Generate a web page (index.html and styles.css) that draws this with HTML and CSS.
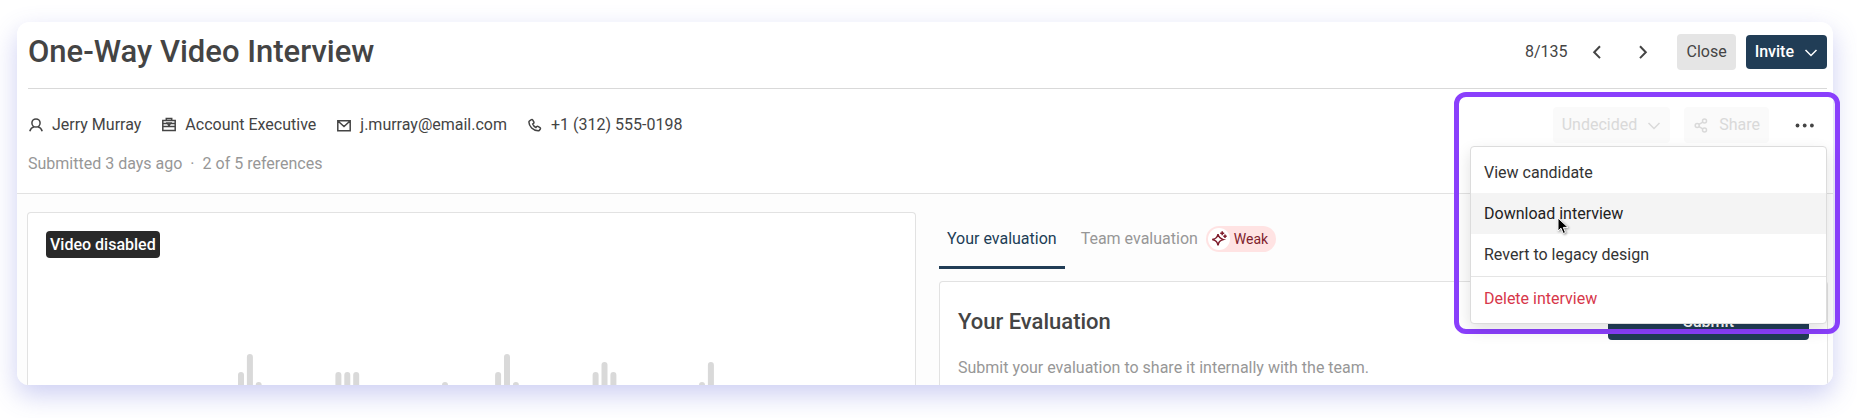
FILE: index.html
```html
<!DOCTYPE html>
<html lang="en">
<head>
    <meta charset="UTF-8">
    <meta name="viewport" content="width=device-width, initial-scale=1.0">
    <title>One-Way Video Interview</title>
    <link rel="stylesheet" href="styles.css">
</head>
<body>
    <main class="interview">
        <header class="interview-header">
            <h1>One-Way Video Interview</h1>
            <nav class="pager">
                <span class="pager-count">8/135</span>
                <button type="button" class="icon-btn" aria-label="Previous">
                    <svg width="16" height="16" viewBox="0 0 16 16"><path d="M11 2.3 5.2 8.2l5.8 5.9"/></svg>
                </button>
                <button type="button" class="icon-btn" aria-label="Next">
                    <svg width="16" height="16" viewBox="0 0 16 16"><path d="M5 2.3l5.8 5.9L5 14.1"/></svg>
                </button>
            </nav>
            <button type="button" class="btn btn-close">Close</button>
            <button type="button" class="btn btn-primary">
                Invite
                <svg width="14" height="14" viewBox="0 0 14 14"><path d="M1.5 5 7 10.5 12.5 5"/></svg>
            </button>
        </header>

        <section class="candidate">
            <div class="candidate-row">
                <ul class="details">
                    <li>
                        <svg width="16" height="16" viewBox="0 0 16 16"><circle cx="8" cy="6" r="4.1"/><path d="M1.8 14.2c.7-2.5 2.4-4 4.4-4.5M14.2 14.2c-.7-2.5-2.4-4-4.4-4.5"/></svg>
                        Jerry Murray
                    </li>
                    <li>
                        <svg width="16" height="16" viewBox="0 0 16 16"><path d="M1.8 3.5h12.4v9.9H1.8zM5.300 3.300V1.600h5.400v1.700M1.800 6.600h4.400M14.200 6.600H9.800M1.800 9.600h12.400M6.200 5.900h3.600L8 8.600z"/></svg>
                        Account Executive
                    </li>
                    <li>
                        <svg width="16" height="16" viewBox="0 0 16 16"><path d="M1.8 3.8h12.4v9.9H1.8zM2.2 4.2 8 9.6l5.8-5.4"/></svg>
                        j.murray@email.com
                    </li>
                    <li>
                        <svg width="16" height="16" viewBox="0 0 16 16"><path d="M2.6 3.8 4.4 2.7c.5-.3 1.1-.1 1.4.4l1.1 2c.2.5.1 1-.3 1.3l-.9.7c.6 1.6 1.6 2.7 3.2 3.4l.8-.9c.4-.4.9-.5 1.3-.2l2 1.2c.5.3.6.9.3 1.4l-.9 1.2c-.3.4-.8.6-1.3.6C6 13.7 2 9.5 1.900 5.100c0-.5.2-1 .7-1.300z"/></svg>
                        +1 (312) 555-0198
                    </li>
                </ul>

                <div class="actions">
                    <button type="button" class="btn btn-disabled" disabled>
                        Undecided
                        <svg width="14" height="14" viewBox="0 0 14 14"><path d="M1.5 5 7 10.5 12.5 5"/></svg>
                    </button>
                    <button type="button" class="btn btn-disabled" disabled>
                        <svg width="16" height="16" viewBox="0 0 16 16"><circle cx="4.2" cy="8.5" r="2"/><circle cx="11.5" cy="4" r="2"/><circle cx="11.5" cy="13" r="2"/><path d="m6 7.4 3.800-2.300M6 9.600l3.800 2.300"/></svg>
                        Share
                    </button>
                    <button type="button" class="icon-btn more-btn" aria-label="More actions" aria-expanded="true">
                        <svg width="20" height="16" viewBox="0 0 20 16"><circle cx="2.5" cy="8.5" r="1.9"/><circle cx="9.7" cy="8.5" r="1.9"/><circle cx="16.9" cy="8.5" r="1.9"/></svg>
                    </button>

                    <div class="highlight"></div>
                    <div class="menu">
                        <button type="button" class="menu-item">View candidate</button>
                        <button type="button" class="menu-item is-hovered">Download interview</button>
                        <button type="button" class="menu-item">Revert to legacy design</button>
                        <hr>
                        <button type="button" class="menu-item is-danger">Delete interview</button>
                        <svg class="pointer" width="12" height="19" viewBox="0 0 12 19"><path d="M1 1v13l3-2.8 2.2 5.3 2.3-1-2.2-5.1H11z"/></svg>
                    </div>
                </div>
            </div>
            <p class="submitted"><span>Submitted 3 days ago</span><span>·</span><span>2 of 5 references</span></p>
        </section>

        <section class="workspace">
            <div class="panel video-panel">
                <span class="video-label">Video disabled</span>
                <svg class="waveform" width="492" height="31" viewBox="-12 0 492 31">
                    <rect x="0" y="18" width="6" height="40" rx="3"/>
                    <rect x="8.9" y="0" width="6" height="76" rx="3"/>
                    <rect x="17.7" y="28" width="6" height="20" rx="3"/>
                    <rect x="97.4" y="18" width="6" height="40" rx="3"/>
                    <rect x="106.3" y="18" width="6" height="40" rx="3"/>
                    <rect x="115.2" y="18" width="6" height="40" rx="3"/>
                    <rect x="204" y="28" width="6" height="20" rx="3"/>
                    <rect x="257.1" y="18" width="6" height="40" rx="3"/>
                    <rect x="266" y="0" width="6" height="76" rx="3"/>
                    <rect x="274.9" y="28" width="6" height="20" rx="3"/>
                    <rect x="354.6" y="18" width="6" height="40" rx="3"/>
                    <rect x="363.5" y="8" width="6" height="60" rx="3"/>
                    <rect x="372.4" y="18" width="6" height="40" rx="3"/>
                    <rect x="461" y="28" width="6" height="20" rx="3"/>
                    <rect x="469.9" y="8" width="6" height="60" rx="3"/>
                </svg>
            </div>

            <div class="evaluation">
                <div class="tabs">
                    <button type="button" class="tab is-active">Your evaluation</button>
                    <button type="button" class="tab">
                        Team evaluation
                        <span class="score">
                            <span class="score-icon">
                                <svg width="18" height="18" viewBox="0 0 18 18"><path d="M8 4.2c.7 3.3 1.7 4.4 5.3 5.4C9.7 10.6 8.7 11.7 8 15.4 7.2 11.7 6.2 10.6 2.3 9.6 6.2 8.6 7.2 7.5 8 4.2zM12.2 1.2v4M10.2 3.2h4M15 4.5v3.4M13.3 6.2h3.4"/></svg>
                            </span>
                            Weak
                        </span>
                    </button>
                </div>
                <div class="panel evaluation-panel">
                    <div class="evaluation-head">
                        <h2>Your Evaluation</h2>
                        <button type="button" class="btn btn-primary btn-submit">Submit</button>
                    </div>
                    <p>Submit your evaluation to share it internally with the team.</p>
                </div>
            </div>
        </section>
    </main>
</body>
</html>
```
FILE: styles.css
```css
* {
    box-sizing: border-box;
}

body {
    margin: 0;
    padding: 22px 24px 33px 17px;
    background-color: #fff;
    color: #444;
    font-family: Roboto, Arial, sans-serif;
    font-size: 16px;
    line-height: 24px;
}

h1, h2, p, ul {
    margin: 0;
}

button {
    border: none;
    background: none;
    color: inherit;
    font: inherit;
    cursor: pointer;
}

svg {
    flex-shrink: 0;
    fill: none;
    stroke: currentColor;
    stroke-width: 1.5px;
}

.interview {
    background-color: #fff;
    border-radius: 12px;
    box-shadow: 0 10px 26px rgba(90, 95, 215, 0.3);
}

/* Header */
.interview-header {
    display: flex;
    align-items: center;
    gap: 10px;
    margin: 0 6px 0 11px;
    padding: 12px 0 18px;
    border-bottom: 1px solid #d9d9d9;
}

.interview-header h1 {
    flex-grow: 1;
    font-size: 31px;
    font-weight: 500;
    line-height: 36px;
}

.pager {
    display: flex;
    align-items: center;
    gap: 14px;
    margin-right: 8px;
}

.icon-btn {
    display: flex;
    align-items: center;
    justify-content: center;
    width: 32px;
    height: 32px;
    padding: 0;
}

.icon-btn svg {
    stroke-width: 2px;
}

.btn {
    display: flex;
    align-items: center;
    justify-content: center;
    gap: 10px;
    height: 36px;
    padding: 0 9px;
    border-radius: 4px;
}

.btn-close {
    background-color: #e5e5e5;
}

.btn-primary {
    height: 34px;
    background-color: #213d56;
    color: #fff;
    font-weight: 500;
}

.btn-disabled {
    background-color: #fafafa;
    color: #d9d9d9;
    cursor: default;
}

/* Candidate details */
.candidate {
    padding: 18px 6px 17px 11px;
    border-bottom: 1px solid #e2e2e2;
}

.candidate-row {
    display: flex;
    align-items: center;
    justify-content: space-between;
    margin-bottom: 9px;
}

.details {
    display: flex;
    gap: 20px;
    padding: 0;
    list-style: none;
}

.details li {
    display: flex;
    align-items: center;
    gap: 8px;
}

.submitted {
    display: flex;
    gap: 8px;
    color: #979797;
}

.actions {
    position: relative;
    display: flex;
    align-items: center;
    gap: 14px;
}

.more-btn {
    width: 44px;
}

.more-btn svg {
    fill: currentColor;
    stroke: none;
}

/* Actions menu */
.highlight {
    position: absolute;
    z-index: 1;
    top: -15px;
    right: -13px;
    width: 386px;
    height: 242px;
    border: 5px solid #8a3ffc;
    border-radius: 12px;
    pointer-events: none;
}

.menu {
    position: absolute;
    z-index: 2;
    top: 39px;
    right: 0;
    width: 357px;
    padding: 5px 0 4px;
    background-color: #fff;
    border: 1px solid #dcdcdc;
    border-radius: 4px;
    box-shadow: 0 6px 16px rgba(0, 0, 0, 0.12);
}

.menu hr {
    height: 1px;
    margin: 1px 0;
    border: none;
    background-color: #e5e5e5;
}

.menu-item {
    display: block;
    width: 100%;
    height: 41px;
    padding: 0 13px;
    color: #333;
    text-align: left;
}

.menu-item.is-hovered {
    background-color: #f4f4f4;
    color: #222;
}

.menu-item.is-danger {
    color: #d7374a;
}

.pointer {
    position: absolute;
    top: 70px;
    left: 86px;
    fill: #000;
    stroke: #fff;
    stroke-width: 1px;
    filter: drop-shadow(1px 1px 1px rgba(0, 0, 0, 0.4));
}

/* Video and evaluation */
.workspace {
    display: grid;
    grid-template-columns: 1fr 1fr;
    gap: 23px;
    padding: 18px 5px 0 10px;
    background-color: #fdfdfd;
    border-radius: 0 0 12px 12px;
    overflow: hidden;
}

.panel {
    background-color: #fff;
    border: 1px solid #e2e2e2;
    border-bottom: none;
    border-radius: 4px 4px 0 0;
}

.video-panel {
    display: flex;
    flex-direction: column;
    align-items: flex-start;
    justify-content: space-between;
    padding: 18px 18px 0;
}

.video-label {
    padding: 2px 4px 1px;
    border-radius: 4px;
    background-color: #292929;
    color: #fff;
    font-weight: 500;
}

.waveform {
    align-self: center;
    fill: #d9d9d9;
    stroke: none;
}

.tabs {
    display: flex;
    gap: 8px;
    margin-bottom: 12px;
}

.tab {
    display: flex;
    align-items: center;
    gap: 8px;
    height: 57px;
    padding: 0 8px;
    border-bottom: 3px solid transparent;
    color: #979797;
}

.tab.is-active {
    border-bottom-color: #213d56;
    color: #213d56;
}

.score {
    display: flex;
    align-items: center;
    gap: 4px;
    padding: 2px 8px 2px 2px;
    border-radius: 14px;
    background-color: #ffe3e3;
    color: #7f1d2d;
    font-size: 14px;
    line-height: 20px;
}

.score-icon {
    display: flex;
    align-items: center;
    justify-content: center;
    width: 22px;
    height: 22px;
    border-radius: 50%;
    background-color: #fff;
}

.evaluation-panel {
    padding: 22px 18px 5px;
}

.evaluation-head {
    display: flex;
    align-items: center;
    justify-content: space-between;
    margin-bottom: 16px;
}

.evaluation-head h2 {
    font-size: 22px;
    font-weight: 500;
    line-height: 36px;
}

.btn-submit {
    width: 201px;
    height: 36px;
}

.evaluation-panel p {
    color: #979797;
}
```
